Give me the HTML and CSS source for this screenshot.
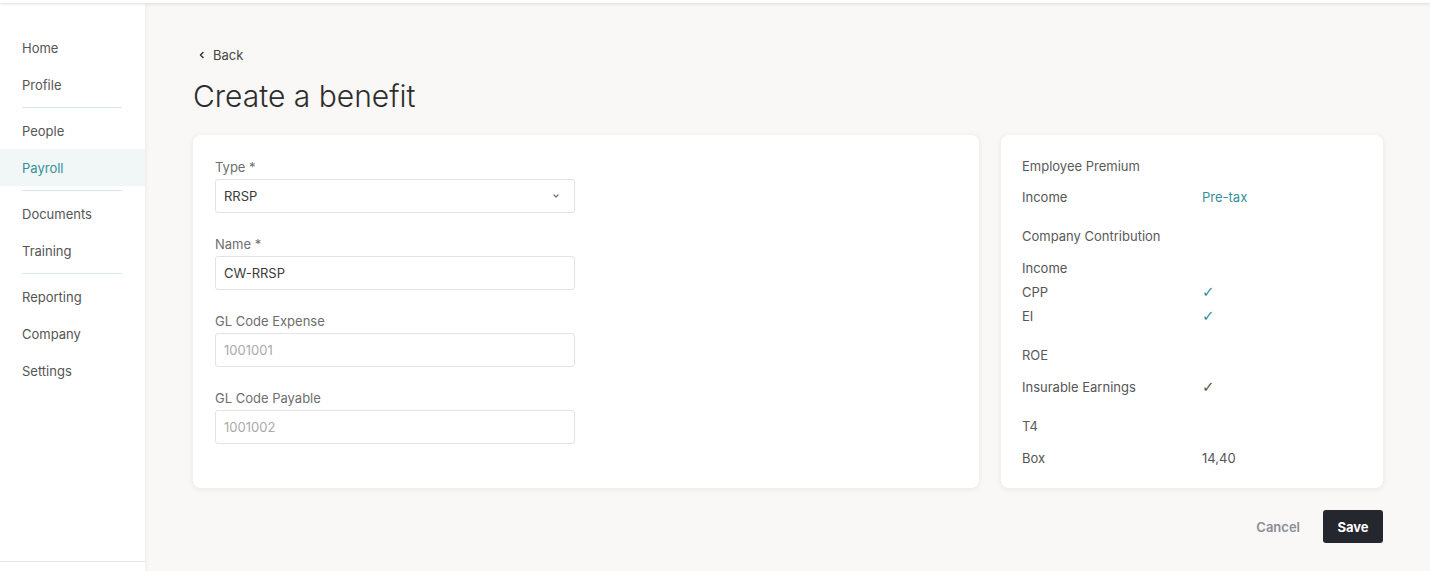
FILE: index.html
```html
<!DOCTYPE html>
<html lang="en">
<head>
  <meta charset="UTF-8">
  <title>Create a benefit</title>
  <link rel="stylesheet" href="styles.css">
</head>
<body>
  <div class="topbar"></div>

  <div class="layout">
    <nav class="sidebar">
      <a class="nav-item" href="#">Home</a>
      <a class="nav-item" href="#">Profile</a>
      <hr class="nav-divider">
      <a class="nav-item" href="#">People</a>
      <a class="nav-item active" href="#">Payroll</a>
      <hr class="nav-divider">
      <a class="nav-item" href="#">Documents</a>
      <a class="nav-item" href="#">Training</a>
      <hr class="nav-divider">
      <a class="nav-item" href="#">Reporting</a>
      <a class="nav-item" href="#">Company</a>
      <a class="nav-item" href="#">Settings</a>
      <div class="sidebar-foot"></div>
    </nav>

    <main class="main">
      <a class="back" href="#">
        <svg width="8" height="8" viewBox="0 0 8 8"><path d="M5 1.5 2.5 4 5 6.5" fill="none" stroke="#333" stroke-width="1.5" stroke-linecap="round" stroke-linejoin="round"/></svg>
        Back
      </a>
      <h1 class="title">Create a benefit</h1>

      <div class="cards">
        <section class="card form-card">
          <div class="field">
            <label>Type *</label>
            <div class="input select">
              <span>RRSP</span>
              <svg width="8" height="6" viewBox="0 0 8 6"><path d="M2 2 4 4 6 2" fill="none" stroke="#777" stroke-width="1.3" stroke-linecap="round" stroke-linejoin="round"/></svg>
            </div>
          </div>
          <div class="field">
            <label>Name *</label>
            <div class="input">CW-RRSP</div>
          </div>
          <div class="field">
            <label>GL Code Expense</label>
            <div class="input placeholder">1001001</div>
          </div>
          <div class="field">
            <label>GL Code Payable</label>
            <div class="input placeholder">1001002</div>
          </div>
        </section>

        <section class="card summary-card">
          <div class="group">
            <div class="group-title">Employee Premium</div>
            <div class="row"><span>Income</span><span class="teal">Pre-tax</span></div>
          </div>
          <div class="group">
            <div class="group-title">Company Contribution</div>
            <div class="row"><span>Income</span><span></span></div>
            <div class="row"><span>CPP</span><span class="teal check">✓</span></div>
            <div class="row"><span>EI</span><span class="teal check">✓</span></div>
          </div>
          <div class="group">
            <div class="group-title">ROE</div>
            <div class="row"><span>Insurable Earnings</span><span class="check">✓</span></div>
          </div>
          <div class="group">
            <div class="group-title">T4</div>
            <div class="row"><span>Box</span><span>14,40</span></div>
          </div>
        </section>
      </div>

      <div class="actions">
        <button class="btn-cancel">Cancel</button>
        <button class="btn-save">Save</button>
      </div>
    </main>
  </div>
</body>
</html>
```

FILE: styles.css
```css
* {
  box-sizing: border-box;
}

html, body {
  margin: 0;
  height: 100%;
  overflow: hidden;
}

body {
  font-family: Inter, "Noto Sans", Arial, sans-serif;
  font-size: 13px;
  color: #444;
  background-color: #f9f8f7;
  display: flex;
  flex-direction: column;
}

.topbar {
  height: 3px;
  background: #fff;
  box-shadow: 0 1px 3px rgba(0,0,0,0.12);
  position: relative;
  z-index: 2;
}

.layout {
  flex: 1;
  display: flex;
}

/* left navigation */
.sidebar {
  width: 145px;
  flex-shrink: 0;
  background: #fff;
  padding-top: 26px;
  display: flex;
  flex-direction: column;
  box-shadow: 1px 0 4px rgba(0,0,0,0.05);
  position: relative;
  z-index: 1;
}

.nav-item {
  display: flex;
  align-items: center;
  height: 37px;
  padding-left: 22px;
  color: #555;
  text-decoration: none;
}

.nav-item.active {
  background: #f1f7f7;
  color: #33909a;
}

.nav-divider {
  border: 0;
  border-top: 1px solid #d5e8ea;
  width: 100px;
  margin: 4px 0 4px 22px;
}

.sidebar-foot {
  margin-top: auto;
  height: 10px;
  border-top: 1px solid #e8e8e8;
}

/* main area */
.main {
  flex: 1;
  padding: 43px 47px 0 48px;
}

.back {
  display: inline-flex;
  align-items: center;
  gap: 7px;
  padding-left: 5px;
  color: #444;
  text-decoration: none;
  line-height: 16px;
}

.title {
  font-size: 30px;
  font-weight: 300;
  color: #2d2d2d;
  margin: 14px 0 20px;
  line-height: 38px;
  letter-spacing: 0;
}

.cards {
  display: grid;
  grid-template-columns: 1fr 382px;
  gap: 22px;
}

.card {
  background: #fff;
  border-radius: 8px;
  box-shadow: 0 1px 6px rgba(0,0,0,0.08);
}

.form-card {
  padding: 24px 22px 44px;
  display: flex;
  flex-direction: column;
  gap: 23px;
}

.field label {
  display: block;
  color: #6e6e6e;
  line-height: 16px;
  margin-bottom: 4px;
}

.input {
  width: 360px;
  height: 34px;
  border: 1px solid #e3e3e3;
  border-radius: 3px;
  padding: 0 8px;
  display: flex;
  align-items: center;
  color: #3a3a3a;
}

.input.placeholder {
  color: #aaa;
}

.select {
  justify-content: space-between;
  padding-right: 14px;
}

.summary-card {
  padding: 19px 21px 18px;
}

.group + .group {
  margin-top: 15px;
}

.group-title {
  line-height: 24px;
  margin-bottom: 7px;
  color: #5a5a5a;
}

.group + .group .group-title {
  margin-bottom: 8px;
}

.row {
  display: grid;
  grid-template-columns: 180px 1fr;
  line-height: 24px;
  color: #555;
}

.teal {
  color: #33909a;
}

.check {
  font-family: "DejaVu Sans", sans-serif;
  font-size: 15px;
}

.actions {
  display: flex;
  justify-content: flex-end;
  align-items: center;
  gap: 23px;
  margin-top: 22px;
}

.btn-cancel {
  background: none;
  border: 0;
  font: inherit;
  font-weight: 600;
  color: #8b8e93;
  padding: 0;
  cursor: pointer;
}

.btn-save {
  background: #24272d;
  color: #fff;
  border: 0;
  border-radius: 3px;
  height: 33px;
  width: 60px;
  font: inherit;
  font-weight: 700;
  cursor: pointer;
}
```
